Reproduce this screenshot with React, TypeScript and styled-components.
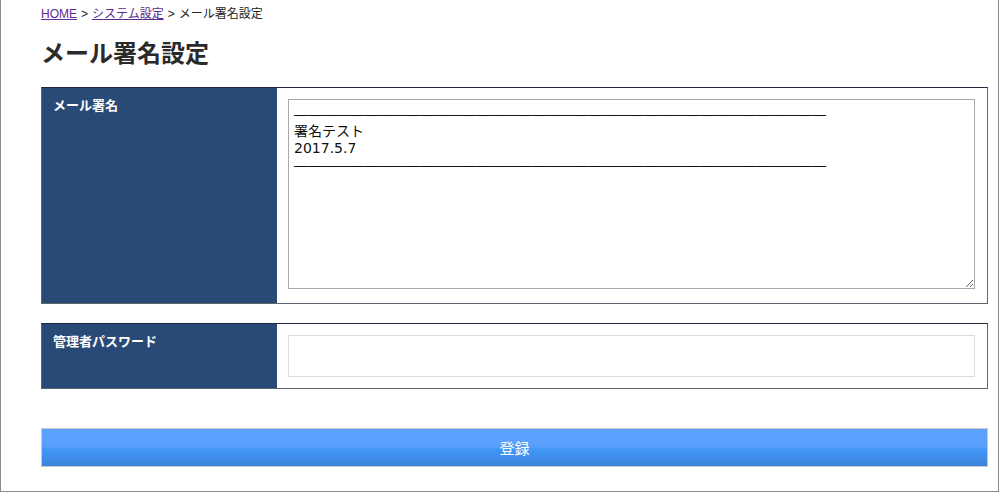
import React from 'react'
import styled, { createGlobalStyle } from 'styled-components'

const GlobalStyle = createGlobalStyle`
  html, body {
    margin: 0;
    padding: 0;
    background: #fff;
  }
  body {
    font-family: "Liberation Sans", "Noto Sans CJK JP", sans-serif;
    color: #222;
  }
`

const RULE = '―'.repeat(38)
const SIGNATURE = `${RULE}\n署名テスト\n2017.5.7\n${RULE}`

const App = () => {
  return (
    <>
      <GlobalStyle />
      <Frame>
        <Breadcrumb>
          <Crumb href="#">HOME</Crumb>
          <Sep>&gt;</Sep>
          <Crumb href="#">システム設定</Crumb>
          <Sep>&gt;</Sep>
          <span>メール署名設定</span>
        </Breadcrumb>
        <Title>メール署名設定</Title>

        <FormRow>
          <Label>メール署名</Label>
          <Field>
            <TextArea defaultValue={SIGNATURE} wrap="off" />
          </Field>
        </FormRow>

        <FormRow $gap>
          <Label>管理者パスワード</Label>
          <Field>
            <Input type="password" />
          </Field>
        </FormRow>

        <Submit type="button">登録</Submit>
      </Frame>
    </>
  )
}

export default App

const Frame = styled.div`
  box-sizing: border-box;
  width: 999px;
  height: 492px;
  padding: 5px 10px 0 40px;
  border: 1px solid #8c8c8c;
  border-top: none;
`
const Breadcrumb = styled.div`
  font-size: 12px;
  line-height: 18px;
  color: #222;
  display: flex;
  align-items: center;
`
const Crumb = styled.a`
  color: #5a2a92;
  text-decoration: underline;
`
const Sep = styled.span`
  margin: 0 4px;
`
const Title = styled.h1`
  margin: 16px 0 18px;
  font-size: 24px;
  line-height: 30px;
  font-weight: bold;
  color: #2a2a2a;
`
const FormRow = styled.div<{ $gap?: boolean }>`
  display: flex;
  margin-top: ${p => (p.$gap ? '19px' : '0')};
  border: 1px solid #5d6470;
  border-top-color: #1e2838;
`
const Label = styled.div`
  box-sizing: border-box;
  width: 235px;
  flex-shrink: 0;
  padding: 8px 11px;
  background: #294a76;
  color: #fff;
  font-size: 13px;
  line-height: 19px;
  font-weight: bold;
`
const Field = styled.div`
  flex: 1;
  padding: 11px 12px 14px 11px;
  background: #fff;
`
const TextArea = styled.textarea`
  box-sizing: border-box;
  display: block;
  width: 100%;
  height: 190px;
  padding: 6px 5px;
  margin: 0;
  border: 1px solid #a9a9a9;
  border-radius: 0;
  font-family: "DejaVu Sans", "Noto Sans CJK JP", sans-serif;
  font-size: 14px;
  line-height: 17px;
  color: #111;
  white-space: pre;
  overflow: hidden;
  outline: none;
`
const Input = styled.input`
  box-sizing: border-box;
  display: block;
  width: 100%;
  height: 42px;
  margin: 0 0 -3px;
  border: 1px solid #dcdcdc;
  border-radius: 0;
  outline: none;
`
const Submit = styled.button`
  box-sizing: border-box;
  display: block;
  width: 100%;
  height: 39px;
  margin-top: 39px;
  border: 1px solid #c9c9c9;
  background: linear-gradient(
    #5ba2ff 0%,
    #5a9ffb 48%,
    #4298fa 52%,
    #3b82d8 100%
  );
  color: #fff;
  font-family: "Liberation Sans", "Noto Sans CJK JP", sans-serif;
  font-size: 15px;
  cursor: pointer;
`
